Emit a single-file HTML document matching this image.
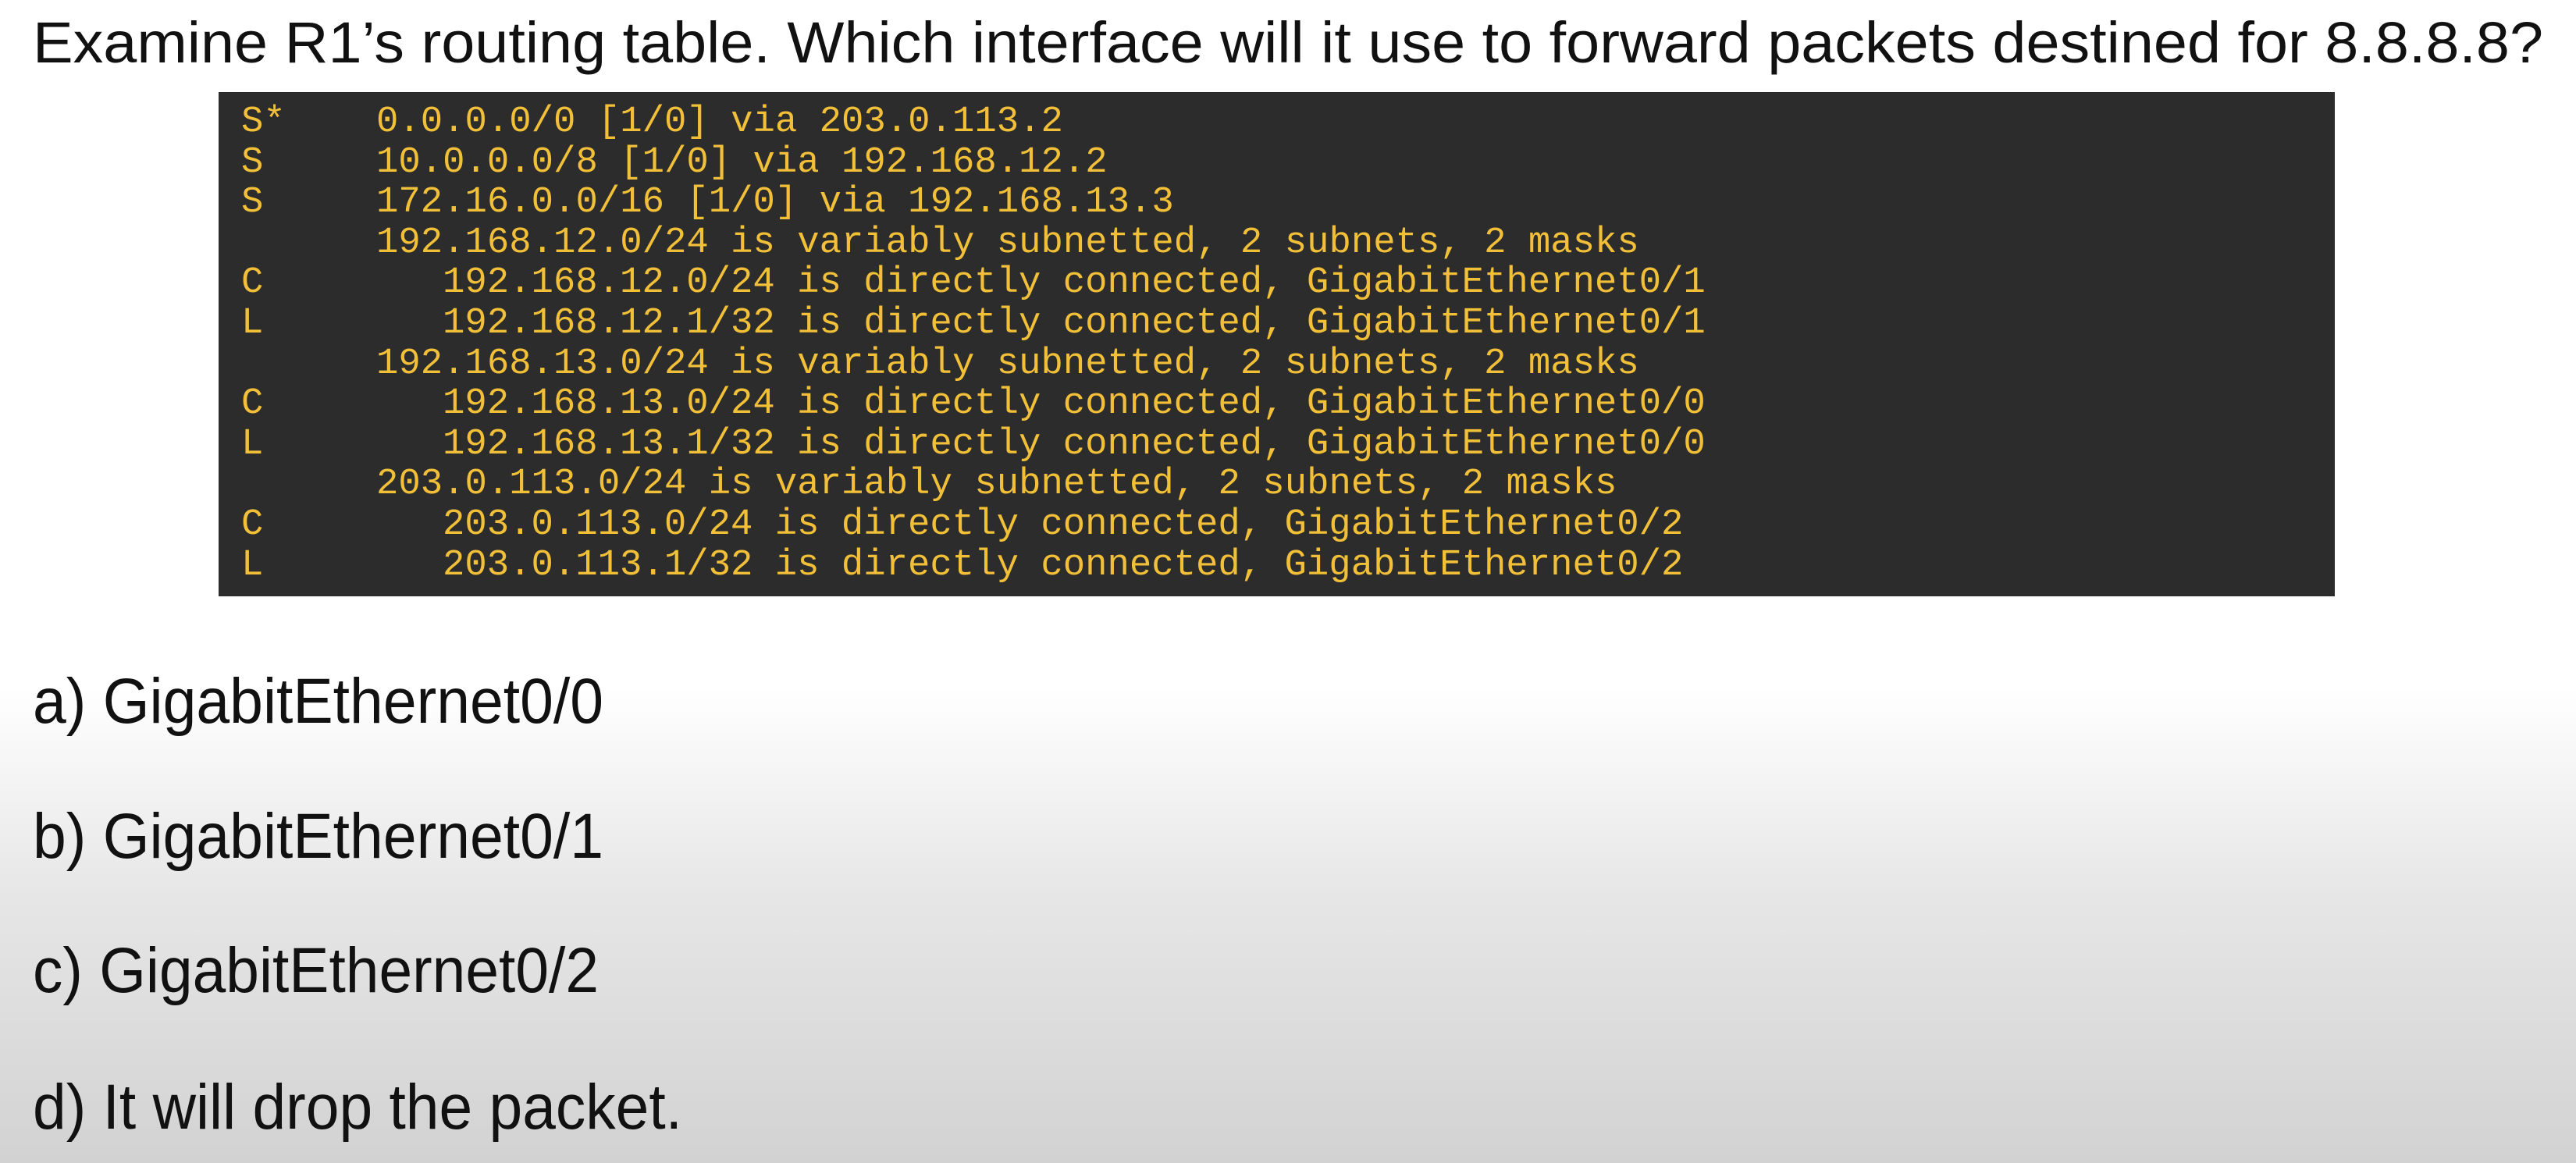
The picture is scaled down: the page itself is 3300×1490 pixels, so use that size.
<!DOCTYPE html>
<html><head><meta charset="utf-8">
<style>
html,body{margin:0;padding:0;}
body{width:3300px;height:1490px;overflow:hidden;background:linear-gradient(180deg,#ffffff 0px,#ffffff 880px,#e6e6e6 1150px,#d2d2d2 1490px);}
svg{display:block;}
</style></head>
<body>
<svg width="3300" height="1490" viewBox="0 0 3300 1490" xmlns="http://www.w3.org/2000/svg">
<text x="42" y="80" font-family="Liberation Sans, Arial, sans-serif" font-size="74" fill="#111" textLength="3216" lengthAdjust="spacingAndGlyphs">Examine R1’s routing table. Which interface will it use to forward packets destined for 8.8.8.8?</text>
<rect x="280" y="118" width="2711" height="646" fill="#2c2c2c"/>
<g font-family="Liberation Mono, monospace" font-size="47.3" fill="#f2c038" xml:space="preserve">
<text x="309" y="168">S*</text><text x="482" y="168">0.0.0.0/0 [1/0] via 203.0.113.2</text>
<text x="309" y="220">S</text><text x="482" y="220">10.0.0.0/8 [1/0] via 192.168.12.2</text>
<text x="309" y="271">S</text><text x="482" y="271">172.16.0.0/16 [1/0] via 192.168.13.3</text>
<text x="482" y="323">192.168.12.0/24 is variably subnetted, 2 subnets, 2 masks</text>
<text x="309" y="374">C</text><text x="567" y="374">192.168.12.0/24 is directly connected, GigabitEthernet0/1</text>
<text x="309" y="426">L</text><text x="567" y="426">192.168.12.1/32 is directly connected, GigabitEthernet0/1</text>
<text x="482" y="478">192.168.13.0/24 is variably subnetted, 2 subnets, 2 masks</text>
<text x="309" y="529">C</text><text x="567" y="529">192.168.13.0/24 is directly connected, GigabitEthernet0/0</text>
<text x="309" y="581">L</text><text x="567" y="581">192.168.13.1/32 is directly connected, GigabitEthernet0/0</text>
<text x="482" y="632">203.0.113.0/24 is variably subnetted, 2 subnets, 2 masks</text>
<text x="309" y="684">C</text><text x="567" y="684">203.0.113.0/24 is directly connected, GigabitEthernet0/2</text>
<text x="309" y="736">L</text><text x="567" y="736">203.0.113.1/32 is directly connected, GigabitEthernet0/2</text>
</g>
<g font-family="Liberation Sans, Arial, sans-serif" font-size="82" fill="#111">
<text x="42" y="926" textLength="731" lengthAdjust="spacingAndGlyphs">a) GigabitEthernet0/0</text>
<text x="42" y="1099" textLength="731" lengthAdjust="spacingAndGlyphs">b) GigabitEthernet0/1</text>
<text x="42" y="1271" textLength="725" lengthAdjust="spacingAndGlyphs">c) GigabitEthernet0/2</text>
<text x="42" y="1446" textLength="832" lengthAdjust="spacingAndGlyphs">d) It will drop the packet.</text>
</g>
</svg>
</body></html>
